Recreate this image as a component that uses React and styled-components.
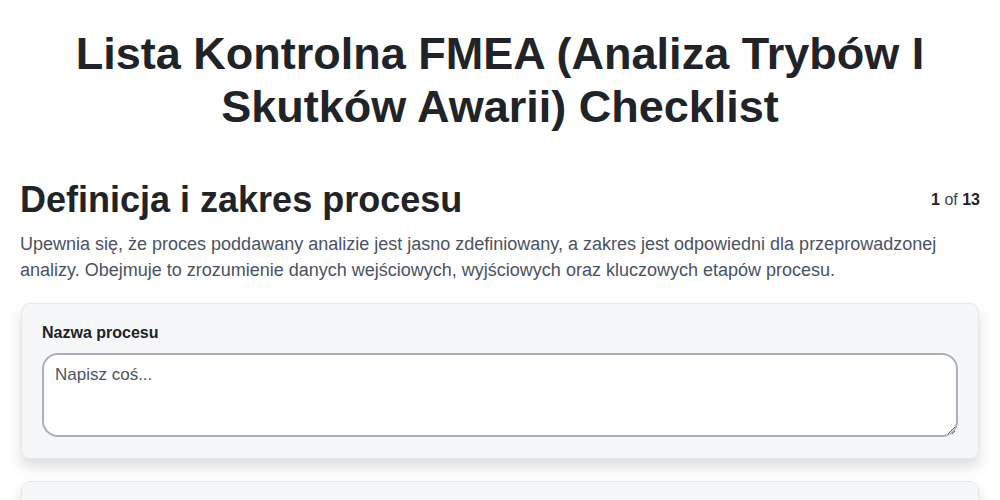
import React from "react";
import styled, { createGlobalStyle } from "styled-components";

const GlobalStyle = createGlobalStyle`
   * {
      box-sizing: border-box;
   }
   body {
      margin: 0;
      background: #ffffff;
      font-family: "Liberation Sans", Arial, sans-serif;
      color: #1f2328;
   }
`;

const Page = styled("div")`
   padding: 0 20px;
`;

const Title = styled("h1")`
   margin: 27px 0 0;
   text-align: center;
   font-size: 45px;
   line-height: 53px;
   font-weight: 700;
   color: #202327;
   padding: 0 40px;
`;

const SectionHead = styled("div")`
   display: flex;
   align-items: center;
   justify-content: space-between;
   margin-top: 45px;
`;

const SectionTitle = styled("h2")`
   margin: 0;
   font-size: 36px;
   line-height: 1.2;
   font-weight: 700;
   color: #202327;
`;

const Counter = styled("div")`
   font-size: 16px;
   color: #3d4450;

   b {
      color: #202327;
   }
`;

const Description = styled("p")`
   margin: 10px 0 0;
   font-size: 18px;
   line-height: 26px;
   color: #4a5262;
`;

const Card = styled("div")`
   margin-top: 20px;
   margin-left: 1px;
   margin-right: 1px;
   background: #f6f7f9;
   border: 1px solid #e6e8ec;
   border-radius: 9px;
   padding: 20px 20px 21px;
   box-shadow: 0 8px 14px rgba(30, 35, 50, 0.16);

   & + & {
      margin-top: 22px;
   }
`;

const Label = styled("label")`
   display: block;
   font-size: 16px;
   line-height: 18px;
   font-weight: 700;
   color: #202327;
   margin-bottom: 11px;
`;

const Area = styled("textarea")`
   display: block;
   width: 100%;
   height: 84px;
   border: 2px solid #a9b0b8;
   border-radius: 16px;
   background: #ffffff;
   padding: 10px 11px;
   font-family: "Liberation Sans", Arial, sans-serif;
   font-size: 17px;
   color: #202327;
   outline: none;

   &::placeholder {
      color: #4b5563;
   }
`;

const App = () => {
   return (
      <Page>
         <GlobalStyle />
         <Title>Lista Kontrolna FMEA (Analiza Trybów I Skutków Awarii) Checklist</Title>
         <SectionHead>
            <SectionTitle>Definicja i zakres procesu</SectionTitle>
            <Counter>
               <b>1</b> of <b>13</b>
            </Counter>
         </SectionHead>
         <Description>
            Upewnia się, że proces poddawany analizie jest jasno zdefiniowany, a zakres jest
            odpowiedni dla przeprowadzonej analizy. Obejmuje to zrozumienie danych wejściowych,
            wyjściowych oraz kluczowych etapów procesu.
         </Description>
         <Card>
            <Label>Nazwa procesu</Label>
            <Area placeholder="Napisz coś..." />
         </Card>
         <Card>
            <Label>Zakres analizy</Label>
            <Area placeholder="Napisz coś..." />
         </Card>
      </Page>
   );
};

export default App;
